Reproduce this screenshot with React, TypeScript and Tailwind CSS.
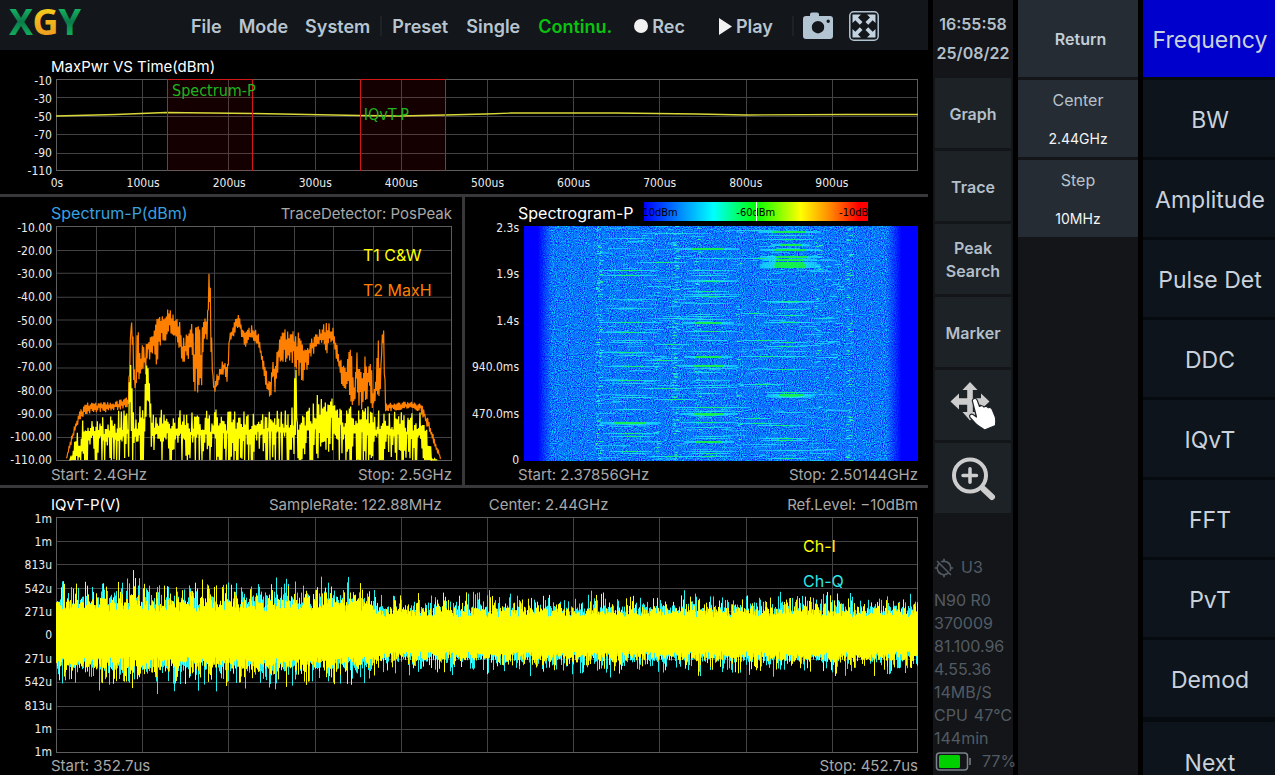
import React from "react";
import { MdGpsOff } from "react-icons/md";

const UI = "font-['Inter','Noto_Sans_CJK_SC',sans-serif]";
const AXIS = "font-['DejaVu_Sans_Condensed','DejaVu_Sans',sans-serif]";

function makeRandom(seed: number) {
  let s = seed;
  return () => {
    s = (s * 1664525 + 1013904223) % 4294967296;
    return s / 4294967296;
  };
}

/* ---------- trace data ---------- */

// [x, highest y, lowest y] of the max-hold trace, three units to a pixel
const maxHold: number[][] = [
  [31, 700, 705], [43, 650, 665], [56, 600, 620], [71, 560, 585], [93, 536, 562], [121, 534, 558], [171, 534, 556],
  [206, 520, 546], [216, 515, 542], [220, 420, 500], [225, 288, 310], [229, 288, 355], [234, 425, 490], [239, 450, 510],
  [244, 315, 480], [248, 300, 440], [253, 405, 460], [261, 360, 450], [269, 375, 440], [276, 325, 410], [286, 305, 370],
  [301, 298, 405], [311, 285, 360], [326, 275, 345], [336, 248, 310], [351, 260, 320], [361, 280, 335], [371, 300, 370],
  [379, 345, 420], [391, 335, 385], [406, 305, 400], [411, 335, 465], [421, 325, 498], [431, 330, 490], [438, 335, 480],
  [445, 268, 330], [452, 295, 345], [456, 230, 330], [459, 118, 180], [463, 200, 300], [467, 345, 430], [471, 445, 490],
  [476, 485, 508], [483, 450, 480], [496, 420, 450], [506, 400, 445], [514, 405, 462], [521, 325, 355], [531, 305, 335],
  [543, 268, 305], [553, 280, 315], [566, 325, 362], [581, 310, 345], [591, 302, 340], [606, 325, 355], [616, 375, 395],
  [626, 415, 460], [636, 465, 505], [643, 475, 518], [651, 385, 465], [659, 405, 498], [666, 365, 425], [676, 335, 405],
  [689, 322, 405], [703, 315, 395], [713, 330, 405], [726, 335, 435], [736, 355, 460], [751, 375, 435], [761, 355, 395],
  [771, 337, 385], [786, 320, 355], [801, 303, 345], [811, 300, 378], [821, 300, 345], [831, 310, 345], [841, 355, 395],
  [851, 395, 425], [859, 425, 497], [871, 430, 485], [881, 385, 495], [884, 365, 505], [893, 495, 545], [903, 390, 475],
  [911, 445, 545], [921, 395, 525], [931, 405, 555], [941, 400, 505], [953, 495, 555], [961, 425, 505], [967, 345, 485],
  [973, 425, 515], [980, 285, 335], [984, 325, 425], [989, 532, 555], [1011, 536, 555], [1051, 532, 550],
  [1093, 535, 555], [1106, 555, 585], [1121, 600, 620], [1136, 645, 665], [1156, 700, 705],
];

// [x, highest y] of the clear-write trace
const clearWrite: number[][] = [
  [40, 700], [50, 650], [62, 615], [80, 585], [110, 558], [160, 562], [216, 550], [222, 440], [225, 418], [229, 520],
  [235, 545], [265, 545], [270, 440], [274, 412], [280, 480], [286, 545], [404, 555], [407, 505], [411, 555], [500, 550],
  [640, 545], [714, 545], [717, 425], [719, 412], [723, 520], [729, 555], [758, 540], [775, 520], [800, 500], [820, 500],
  [850, 520], [870, 545], [980, 550], [1090, 555], [1110, 600], [1130, 650], [1145, 700],
];

function interpolate(points: number[][], x: number, column: number) {
  for (let i = 1; i < points.length; i++) {
    if (x <= points[i][0]) {
      const a = points[i - 1];
      const b = points[i];
      const t = (x - a[0]) / (b[0] - a[0]);
      return a[column] + (b[column] - a[column]) * t;
    }
  }
  return points[points.length - 1][column];
}

function maxHoldPath() {
  const rnd = makeRandom(7);
  let d = "";
  let up = true;
  for (let x = 31; x <= 1156; x += 2) {
    const hi = interpolate(maxHold, x, 1);
    const lo = interpolate(maxHold, x, 2);
    const r = Math.pow(rnd(), 1.5) * 0.6 - 0.16;
    const y = up ? hi + (lo - hi) * r : lo - (lo - hi) * r;
    d += `${d ? "L" : "M"}${x} ${Math.round(Math.min(y, 705))}`;
    up = !up;
  }
  return d;
}

function clearWritePath() {
  const rnd = makeRandom(21);
  let d = "";
  let up = true;
  for (let x = 40; x <= 1145; x += 2) {
    const hi = interpolate(clearWrite, x, 1);
    const spike = hi < 495;
    const y = up
      ? hi - 6 + (spike ? 0 : Math.pow(rnd(), 0.7) * 74)
      : Math.min(705, hi + (spike ? 60 : 74) + Math.pow(rnd(), 1.7) * 160);
    d += `${d ? "L" : "M"}${x} ${Math.round(Math.min(y, 705))}`;
    up = !up;
  }
  return d;
}

function burstPath(seed: number, gain: number) {
  const rnd = makeRandom(seed);
  let d = "";
  for (let x = 0; x < 862; x++) {
    const wide = x < 300 ? 1 : x < 325 ? 1 - (x - 300) / 100 : 0.75;
    const reach = () => (23 + rnd() * 13 + Math.pow(rnd(), 4) * 22 + (rnd() > 0.98 ? rnd() * 14 : 0)) * wide * gain;
    const top = reach();
    const bottom = reach() * 0.95;
    d += `M${x + 0.5} ${(117.5 - top).toFixed(1)}V${(118 + bottom).toFixed(1)}`;
  }
  return d;
}

const maxHoldD = maxHoldPath();
const clearWriteD = clearWritePath();
const channelQ = burstPath(91, 1.06);
const channelI = burstPath(38, 1);

/* ---------- spectrogram data ---------- */

// [x1, x2, y, level]: 0 cyan, 1 green heart, 2 strong green
const bursts: number[][] = [
  [250, 390, 35, 0], [225, 405, 131, 1], [225, 400, 148, 1], [225, 415, 287, 1], [232, 400, 317, 1], [260, 380, 341, 0],
  [250, 360, 347, 0], [225, 390, 377, 1], [270, 370, 388, 0], [240, 415, 420, 1], [225, 410, 461, 1], [260, 390, 470, 0],
  [275, 370, 508, 0], [260, 380, 514, 0], [270, 380, 548, 0], [228, 410, 588, 2], [250, 395, 594, 0], [238, 405, 622, 1],
  [260, 390, 629, 1], [255, 385, 675, 1], [290, 375, 681, 0], [250, 400, 220, 0], [245, 390, 247, 0],
  [458, 645, 65, 2], [500, 660, 97, 0], [488, 632, 132, 0], [500, 610, 148, 0], [480, 640, 161, 0], [485, 640, 166, 1],
  [490, 615, 194, 1], [470, 640, 203, 0], [478, 640, 209, 1], [475, 620, 230, 0], [500, 585, 265, 0], [475, 600, 270, 0],
  [465, 620, 279, 0], [475, 630, 287, 2], [478, 640, 316, 1], [510, 610, 343, 0], [490, 590, 376, 0], [480, 625, 391, 2],
  [465, 640, 418, 2], [480, 640, 425, 0], [490, 605, 437, 0], [510, 625, 462, 0], [505, 630, 477, 0], [510, 640, 483, 0],
  [500, 600, 500, 0], [440, 680, 544, 1], [470, 660, 556, 0], [470, 640, 561, 2], [500, 610, 568, 1], [465, 640, 589, 1],
  [480, 620, 603, 0], [510, 620, 630, 0], [500, 625, 637, 0], [480, 630, 645, 2], [475, 640, 675, 0], [500, 620, 682, 1],
  [490, 620, 689, 1],
  [700, 890, 16, 2], [720, 870, 28, 0], [730, 870, 40, 1], [740, 860, 53, 2], [708, 890, 69, 2], [708, 895, 89, 2],
  [715, 880, 99, 2], [715, 880, 107, 2], [708, 890, 113, 2], [708, 890, 119, 2], [715, 885, 224, 1],
  [730, 870, 229, 0], [750, 850, 250, 0], [750, 850, 268, 1], [720, 870, 287, 1], [740, 850, 347, 1], [720, 850, 361, 1],
  [740, 870, 390, 0], [720, 850, 430, 1], [725, 870, 499, 1], [730, 875, 504, 2], [728, 870, 509, 1], [740, 860, 514, 0],
  [700, 850, 597, 1], [720, 855, 635, 1], [710, 855, 641, 1], [705, 905, 671, 0], [730, 850, 695, 1], [750, 850, 557, 0],
  [340, 490, 109, 1], [375, 540, 277, 0], [390, 495, 354, 1], [355, 480, 401, 1], [350, 500, 485, 1], [390, 520, 520, 1],
  [380, 510, 690, 1], [350, 560, 22, 0], [660, 760, 95, 1], [650, 730, 262, 1], [650, 790, 342, 1], [650, 800, 389, 1],
  [650, 780, 473, 1], [645, 740, 575, 1], [640, 770, 592, 1], [640, 760, 12, 0], [860, 940, 277, 0], [870, 920, 352, 0],
];

type Mark = { x: number; y: number; w: number; h: number; fill: string; opacity: number };

function speckles(): Mark[] {
  const rnd = makeRandom(55);
  const marks: Mark[] = [];
  [[226, 130], [455, 140], [975, 90], [882, 40], [398, 30], [645, 34], [522, 40]].forEach(([cx, count]) => {
    for (let i = 0; i < count; i++) {
      marks.push({
        x: cx - 10 + Math.floor(rnd() * 5) * 3,
        y: Math.floor(rnd() * 235) * 3,
        w: 3 + Math.floor(rnd() * 4) * 3,
        h: 3,
        fill: rnd() > 0.6 ? "#2dff8c" : "#25e8ff",
        opacity: 0.55 + rnd() * 0.45,
      });
    }
  });
  for (let i = 0; i < 260; i++) {
    const w = 12 + rnd() * 60;
    marks.push({
      x: 210 + rnd() * 700,
      y: Math.floor(rnd() * 235) * 3,
      w,
      h: 3,
      fill: "#22e0ff",
      opacity: 0.3 + rnd() * 0.4,
    });
  }
  for (let i = 0; i < 22; i++) {
    marks.push({ x: 900 + rnd() * 40, y: Math.floor(rnd() * 160) * 3, w: 9 + rnd() * 15, h: 3, fill: "#22e0ff", opacity: 0.8 });
  }
  return marks;
}

const speckleMarks = speckles();

/* ---------- chart parts ---------- */

function Grid({ w, h, cols, rows }: { w: number; h: number; cols: number; rows: number }) {
  let d = "";
  for (let i = 1; i < cols; i++) d += `M${Math.round((w * i) / cols) + 0.5} 0V${h}`;
  for (let i = 1; i < rows; i++) d += `M0 ${Math.round((h * i) / rows) + 0.5}H${w}`;
  return (
    <g fill="none" strokeWidth="1">
      <path d={d} stroke="#434345" />
      <rect x="0.5" y="0.5" width={w - 1} height={h - 1} stroke="#5e5e60" />
    </g>
  );
}

function YAxis({ labels, width }: { labels: string[]; width: string }) {
  return (
    <div className={`${AXIS} ${width} flex shrink-0 flex-col items-end justify-between pt-[1px] text-[12px] text-[#ececec]`}>
      {labels.map((label, i) => (
        <span key={i} className="flex h-px items-center whitespace-nowrap">
          {label}
        </span>
      ))}
    </div>
  );
}

function PowerPanel() {
  return (
    <section className="flex min-h-0 flex-[144] flex-col pr-[10px]">
      <h2 className="h-[29px] shrink-0 pt-[4px] pl-[51px] text-[15px] leading-[26px] text-white">MaxPwr VS Time(dBm)</h2>
      <div className="flex min-h-0 flex-1 gap-[4px]">
        <YAxis width="w-[52px]" labels={["-10", "-30", "-50", "-70", "-90", "-110"]} />
        <div className="relative min-w-0 flex-1">
          <svg className="absolute inset-0 h-full w-full" viewBox="0 0 862 92" preserveAspectRatio="none" aria-hidden="true">
            <Grid w={862} h={92} cols={10} rows={5} />
            <g fill="#ff0000" fillOpacity="0.08">
              <rect x="111" y="0" width="86" height="92" />
              <rect x="304" y="0" width="85" height="92" />
            </g>
            <polyline
              points="0,37 60,35.5 110,33.5 197,34.5 304,36.5 344,37 389,36 430,35 455,34 560,34 640,35 690,36 790,35.5 862,35.5"
              fill="none"
              stroke="#d8d83a"
              strokeWidth="1.3"
            />
            <path d="M111.5 92V0.5H196.5V92M304.5 92V0.5H389.5V92" fill="none" stroke="#d01818" />
          </svg>
          <span className={`${AXIS} absolute top-[2px] left-[13%] pl-[4px] text-[16px] leading-[20px] text-[#1fb41f]`}>Spectrum-P</span>
          <span className={`${AXIS} absolute top-[26px] left-[35%] pl-[6px] text-[16px] leading-[20px] text-[#1fb41f]`}>IQvT-P</span>
        </div>
      </div>
      <div className={`${AXIS} flex h-[23px] shrink-0 pl-[57px] text-[12px] leading-[24px] text-[#ececec]`}>
        {["0s", "100us", "200us", "300us", "400us", "500us", "600us", "700us", "800us", "900us"].map((t) => (
          <div key={t} className="flex-1">
            <span className="flex w-0 justify-center whitespace-nowrap">{t}</span>
          </div>
        ))}
      </div>
    </section>
  );
}

function SpectrumPanel() {
  return (
    <section className="flex min-w-0 flex-[462] flex-col pr-[10px]">
      <header className="flex h-[29px] shrink-0 justify-between pt-[4px] pl-[51px] leading-[24px]">
        <h2 className="text-[16px] text-[#3aa0e0]">Spectrum-P(dBm)</h2>
        <span className="text-[15px] leading-[26px] text-[#a8a8a8]">TraceDetector: PosPeak</span>
      </header>
      <div className="flex min-h-0 flex-1 gap-[4px]">
        <YAxis
          width="w-[52px]"
          labels={["-10.00", "-20.00", "-30.00", "-40.00", "-50.00", "-60.00", "-70.00", "-80.00", "-90.00", "-100.00", "-110.00"]}
        />
        <div className="relative min-w-0 flex-1">
          <svg className="absolute inset-0 h-full w-full" viewBox="0 0 396 236" preserveAspectRatio="none" aria-hidden="true">
            <Grid w={396} h={236} cols={10} rows={10} />
            <g transform="scale(0.3333)" fill="none">
              <path d={maxHoldD} stroke="#ff8000" strokeWidth="3.6" />
              <path d={clearWriteD} stroke="#ffff00" strokeWidth="3.8" />
            </g>
          </svg>
          <div className="absolute top-[12px] right-0 flex w-[89px] flex-col text-[16px] leading-[35px]">
            <span className="text-[#ffff00]">T1 C&amp;W</span>
            <span className="text-[#ff8000]">T2 MaxH</span>
          </div>
        </div>
      </div>
      <footer className="flex h-[24px] shrink-0 justify-between pl-[51px] text-[15px] leading-[28px] text-[#a8a8a8]">
        <span>Start: 2.4GHz</span>
        <span>Stop: 2.5GHz</span>
      </footer>
    </section>
  );
}

function SpectrogramPanel() {
  return (
    <section className="flex min-w-0 flex-[463] flex-col pr-[10px]">
      <header className="flex h-[29px] shrink-0 items-start gap-[10px] pr-[50px] pl-[53px]">
        <h2 className="pt-[4px] text-[16px] leading-[24px] whitespace-nowrap text-white">Spectrogram-P</h2>
        <div
          className={`${AXIS} relative mt-[5px] h-[19px] min-w-0 flex-1 overflow-hidden bg-[linear-gradient(90deg,#0000ff,#0090ff_17%,#00ffff_31%,#00ff00_50%,#ffff00_70%,#ff8000_84%,#ff0000_96%)] text-[11px] leading-[22px] text-black`}
        >
          <span className="absolute top-0 left-[-11px]">-110dBm</span>
          <span className="absolute inset-x-0 top-0 text-center">-60dBm</span>
          <span className="absolute top-0 right-[-10px]">-10dBm</span>
          <span className="absolute inset-y-0 left-1/2 w-px bg-white" />
        </div>
      </header>
      <div className="flex min-h-0 flex-1 gap-[5px]">
        <YAxis width="w-[54px]" labels={["2.3s", "1.9s", "1.4s", "940.0ms", "470.0ms", "0"]} />
        <svg className="h-full min-w-0 flex-1" viewBox="0 0 1182 705" preserveAspectRatio="none" aria-hidden="true">
          <defs>
            <filter id="grain" x="0" y="0" width="100%" height="100%" colorInterpolationFilters="sRGB">
              <feTurbulence type="fractalNoise" baseFrequency="0.31" numOctaves="2" seed="4" />
              <feColorMatrix values="0 0 0 0 0.04  1.35 0 0 0 -0.21  0 0 0 0 1  0 0 0 0 1" />
            </filter>
            <linearGradient id="edges">
              <stop offset="0" stopColor="#0000ff" />
              <stop offset="0.035" stopColor="#0000ff" />
              <stop offset="0.07" stopColor="#0000ff" stopOpacity="0" />
              <stop offset="0.92" stopColor="#0000ff" stopOpacity="0" />
              <stop offset="0.958" stopColor="#0000ff" />
              <stop offset="1" stopColor="#0000ff" />
            </linearGradient>
            <linearGradient id="cyan">
              <stop offset="0" stopColor="#18e8ff" stopOpacity="0.6" />
              <stop offset="0.5" stopColor="#28f8d8" />
              <stop offset="1" stopColor="#18e8ff" stopOpacity="0.6" />
            </linearGradient>
            <linearGradient id="green">
              <stop offset="0" stopColor="#00e8d0" stopOpacity="0.1" />
              <stop offset="0.3" stopColor="#10f060" />
              <stop offset="0.7" stopColor="#10f060" />
              <stop offset="1" stopColor="#00e8d0" stopOpacity="0.1" />
            </linearGradient>
          </defs>
          <rect width="1182" height="705" fill="#0080ff" filter="url(#grain)" />
          {speckleMarks.map((m, i) => (
            <rect key={i} x={m.x} y={m.y} width={m.w} height={m.h} fill={m.fill} opacity={m.opacity} />
          ))}
          {bursts.map(([x1, x2, y, level], i) => {
            const inset = (x2 - x1) * 0.24;
            const top = Math.round(y / 3) * 3;
            return (
              <g key={i}>
                <rect
                  x={x1}
                  y={top}
                  width={x2 - x1}
                  height={level === 2 ? 6 : 3}
                  fill="url(#cyan)"
                  opacity={level ? 1 : 0.8}
                />
                {level > 0 && (
                  <rect
                    x={x1 + inset}
                    y={top}
                    width={x2 - x1 - inset * 2}
                    height={level === 2 ? 6 : 3}
                    fill={level === 2 ? "#10f020" : "url(#green)"}
                    opacity={level === 2 ? 0.75 : 0.85}
                  />
                )}
              </g>
            );
          })}
          <rect width="1182" height="705" fill="url(#edges)" />
        </svg>
      </div>
      <footer className="flex h-[24px] shrink-0 justify-between pl-[53px] text-[15px] leading-[28px] text-[#a8a8a8]">
        <span>Start: 2.37856GHz</span>
        <span>Stop: 2.50144GHz</span>
      </footer>
    </section>
  );
}

function IqPanel() {
  return (
    <section className="flex min-h-0 flex-[287] flex-col pr-[10px]">
      <header className="flex h-[29px] shrink-0 justify-between pt-[4px] pl-[51px] text-[15px] leading-[26px] text-[#a8a8a8]">
        <h2 className="w-[218px] text-white">IQvT-P(V)</h2>
        <span className="flex flex-1 gap-[47px]">
          <span>SampleRate: 122.88MHz</span>
          <span>Center: 2.44GHz</span>
        </span>
        <span>Ref.Level: −10dBm</span>
      </header>
      <div className="flex min-h-0 flex-1 gap-[4px]">
        <YAxis width="w-[52px]" labels={["1m", "1m", "813u", "542u", "271u", "0", "271u", "542u", "813u", "1m", "1m"]} />
        <div className="relative min-w-0 flex-1">
          <svg className="absolute inset-0 h-full w-full" viewBox="0 0 862 236" preserveAspectRatio="none" aria-hidden="true">
            <Grid w={862} h={236} cols={10} rows={10} />
            <path d={channelQ} stroke="#20f0f0" strokeWidth="1" fill="none" />
            <path d={channelI} stroke="#ffff00" strokeWidth="1" fill="none" />
          </svg>
          <div className="absolute top-[12px] right-0 flex w-[115px] flex-col text-[16px] leading-[35px]">
            <span className="text-[#ffff00]">Ch-I</span>
            <span className="text-[#2ce8e8]">Ch-Q</span>
          </div>
        </div>
      </div>
      <footer className="flex h-[22px] shrink-0 justify-between pl-[51px] text-[15px] leading-[26px] text-[#a8a8a8]">
        <span>Start: 352.7us</span>
        <span>Stop: 452.7us</span>
      </footer>
    </section>
  );
}

/* ---------- icons ---------- */

function Logo() {
  return (
    <svg className="h-[50px] w-[100px]" viewBox="0 0 100 50" role="img" aria-label="XGY">
      <defs>
        <linearGradient id="leaf" x1="0" y1="0" x2="0" y2="1">
          <stop offset="0.25" stopColor="#14b060" />
          <stop offset="0.5" stopColor="#0b7a4a" />
          <stop offset="0.75" stopColor="#12a85a" />
        </linearGradient>
        <linearGradient id="gold" x1="0" y1="0" x2="0" y2="1">
          <stop offset="0.25" stopColor="#f2cc1c" />
          <stop offset="0.75" stopColor="#f0a020" />
        </linearGradient>
      </defs>
      <text x="9" y="35" fontFamily="'Noto Sans', sans-serif" fontWeight="700" fontSize="36" fill="url(#leaf)">
        X<tspan fill="url(#gold)">G</tspan>Y
      </text>
    </svg>
  );
}

function CameraIcon() {
  return (
    <svg className="h-[28px] w-[30px]" viewBox="0 0 30 28" aria-hidden="true">
      <path
        fillRule="evenodd"
        fill="#b3c4d2"
        d="M3 4h4V2.500Q7 0.500 9 0.500h5Q16 0.500 16 2.500V4h11Q30 4 30 7v17Q30 27 27 27H3Q0 27 0 24V7Q0 4 3 4ZM15 9a6.200 6.200 0 1 0 0 12.400A6.200 6.200 0 1 0 15 9ZM25.200 7.500a1.700 1.700 0 1 0 0 3.400 1.700 1.700 0 1 0 0-3.400Z"
      />
    </svg>
  );
}

function FullscreenIcon() {
  const arrow = "M3.500 3.500h8.500l-3 3 4.500 4.500-2.700 2.700-4.500-4.500-2.800 2.800Z";
  return (
    <svg className="h-[30px] w-[30px]" viewBox="0 0 30 30" aria-hidden="true">
      <rect x="0.800" y="0.800" width="28.400" height="28.400" rx="4" fill="none" stroke="#b3c4d2" strokeWidth="1.500" />
      <g fill="#c3d3e0">
        <path d={arrow} />
        <path d={arrow} transform="matrix(-1 0 0 1 30 0)" />
        <path d={arrow} transform="matrix(1 0 0 -1 0 30)" />
        <path d={arrow} transform="matrix(-1 0 0 -1 30 30)" />
      </g>
    </svg>
  );
}

function MoveIcon() {
  return (
    <svg className="h-[50px] w-[46px]" viewBox="0 0 46 50" aria-hidden="true">
      <path
        fill="#cdcdcd"
        d="M20 1L27.500 9H22.800V17.200H31V12.500L39.500 20.500L31 28.500V23.800H22.800V31H27.500L20 39.500L12.500 31H17.200V23.800H9V28.500L0.500 20.500L9 12.500V17.200H17.200V9H12.500Z"
      />
      <path
        fill="#ffffff"
        stroke="#20252a"
        strokeWidth="1.200"
        strokeLinejoin="round"
        d="M22.500 20.500C21.500 17.500 26 16.300 27.200 19.200L29.500 25.500C31 24.200 33 24.600 33.800 26C35.500 24.800 37.300 25.200 38.200 26.800C40.200 26 41.500 27 42.200 28.500L45.300 36C46.200 39 45.600 42 45.500 44.500L34.500 49C31.500 46.500 28.500 45.300 25.500 42.500L20 36.500C18.800 34 21 32.300 23 33.600L26.500 36Z"
      />
    </svg>
  );
}

function ZoomIcon() {
  return (
    <svg className="h-[46px] w-[46px]" viewBox="0 0 46 46" fill="none" stroke="#cdcdcd" strokeLinecap="round" aria-hidden="true">
      <circle cx="20" cy="19.500" r="16" strokeWidth="4" />
      <path d="M13 19.500H26.500M20 12.800V26.200" strokeWidth="3.500" />
      <path d="M33.500 33L42 41" strokeWidth="6" />
    </svg>
  );
}

/* ---------- bars ---------- */

function TopButton({ children, active }: { children: React.ReactNode; active?: boolean }) {
  return (
    <button type="button" className={`flex items-center gap-[4px] ${active ? "text-[#08c410]" : ""}`}>
      {children}
    </button>
  );
}

function TopBar() {
  return (
    <header className="flex h-[50px] shrink-0 items-center bg-[#13161a] text-[18px] font-semibold text-[#b7c5d0]">
      <div className="w-[191px]">
        <Logo />
      </div>
      <nav className="flex items-center pt-[2px]">
        <div className="flex gap-[17px]">
          <TopButton>File</TopButton>
          <TopButton>Mode</TopButton>
          <TopButton>System</TopButton>
        </div>
        <span className="mx-[10px] h-[20px] w-[2px] bg-[#1e2226]" />
        <div className="flex gap-[18px]">
          <TopButton>Preset</TopButton>
          <TopButton>Single</TopButton>
          <TopButton active>Continu.</TopButton>
        </div>
        <div className="ml-[22px] flex gap-[34px]">
          <TopButton>
            <span className="size-[14px] rounded-full bg-[#f2f2f2]" />
            Rec
          </TopButton>
          <TopButton>
            <svg className="h-[17px] w-[13px]" viewBox="0 0 13 17" aria-hidden="true">
              <path d="M0 0L13 8.500L0 17Z" fill="#f2f2f2" />
            </svg>
            Play
          </TopButton>
        </div>
        <span className="mr-[9px] ml-[19px] h-[20px] w-[2px] bg-[#1e2226]" />
        <div className="flex items-center gap-[16px]">
          <button type="button" aria-label="Screenshot">
            <CameraIcon />
          </button>
          <button type="button" aria-label="Full screen">
            <FullscreenIcon />
          </button>
        </div>
      </nav>
    </header>
  );
}

function SideButton({ children, label }: { children: React.ReactNode; label?: string }) {
  return (
    <button type="button" aria-label={label} className="flex h-[70px] shrink-0 items-center justify-center bg-[#1d2227] px-[4px] pt-[2px] leading-[23px]">
      {children}
    </button>
  );
}

function ToolColumn() {
  return (
    <aside className="flex w-[80px] shrink-0 flex-col bg-[#131519] text-[16px] font-semibold text-[#b3bfc9]">
      <div className="flex h-[78px] shrink-0 flex-col items-center pt-[10px] leading-[29px]">
        <time>16:55:58</time>
        <time>25/08/22</time>
      </div>
      <div className="flex flex-col gap-[3px] px-[2px]">
        <SideButton>Graph</SideButton>
        <SideButton>Trace</SideButton>
        <SideButton>Peak Search</SideButton>
        <SideButton>Marker</SideButton>
        <SideButton label="Move">
          <MoveIcon />
        </SideButton>
        <SideButton label="Zoom">
          <ZoomIcon />
        </SideButton>
      </div>
      <div className="mt-auto flex flex-col pb-[2px] pl-[1px] text-[16px] leading-[23px] font-normal text-[#525b63]">
        <div className="mb-[10px] flex items-center gap-[7px]">
          <MdGpsOff size={20} />
          U3
        </div>
        <span>N90 R0</span>
        <span>370009</span>
        <span>81.100.96</span>
        <span>4.55.36</span>
        <span>14MB/S</span>
        <div className="flex gap-[6px]">
          <span>CPU</span>
          <span>47℃</span>
        </div>
        <span>144min</span>
        <div className="flex items-center gap-[11px] pl-[1px]">
          <svg className="h-[19px] w-[36px] shrink-0" viewBox="0 0 36 19" aria-hidden="true">
            <rect x="1.500" y="1" width="31" height="17" rx="3" fill="none" stroke="#7a838a" strokeWidth="1.500" />
            <rect x="4" y="3" width="21" height="13" rx="1.500" fill="#00d000" />
            <path d="M35 6V13" stroke="#7a838a" strokeWidth="1.500" />
          </svg>
          77%
        </div>
      </div>
    </aside>
  );
}

function FieldButton({ name, value }: { name: string; value: string }) {
  return (
    <button
      type="button"
      className="flex h-[77px] shrink-0 flex-col items-center justify-center gap-[15px] bg-[#252c33] pt-[2px] text-[16px] leading-[24px] text-[#b8c2ca]"
    >
      <span>{name}</span>
      <span className="text-[14px] text-[#f4f4f4]">{value}</span>
    </button>
  );
}

function FieldColumn() {
  return (
    <aside className="flex w-[120px] shrink-0 flex-col gap-[3px] bg-[#131519]">
      <button type="button" className="h-[77px] shrink-0 bg-[#252c33] pl-[5px] text-[16px] font-semibold text-[#c3ced6]">
        Return
      </button>
      <FieldButton name="Center" value="2.44GHz" />
      <FieldButton name="Step" value="10MHz" />
    </aside>
  );
}

function MenuColumn() {
  return (
    <nav className="flex w-[132px] shrink-0 flex-col gap-[3px] bg-[#060b10] text-[23px] text-[#c9d2dc]">
      <button type="button" className="h-[77px] shrink-0 bg-[#0000cd] pt-[4px] pl-[2px] whitespace-nowrap">
        Frequency
      </button>
      {["BW", "Amplitude", "Pulse Det", "DDC", "IQvT", "FFT", "PvT", "Demod"].map((item) => (
        <button key={item} type="button" className="h-[77px] shrink-0 bg-[#0d141b] pt-[4px] pl-[2px] whitespace-nowrap">
          {item}
        </button>
      ))}
      <button type="button" className="mt-[2px] h-[80px] shrink-0 bg-[#0d141b] pt-[2px] pl-[2px]">
        Next
      </button>
    </nav>
  );
}

export default function App() {
  return (
    <div className={`${UI} flex h-screen min-h-[600px] gap-[5px] overflow-hidden bg-black`}>
      <main className="flex min-w-0 flex-1 flex-col">
        <TopBar />
        <PowerPanel />
        <div className="h-[3px] shrink-0 bg-[#38383b]" />
        <div className="flex min-h-0 flex-[288]">
          <SpectrumPanel />
          <div className="w-[3px] shrink-0 bg-[#38383b]" />
          <SpectrogramPanel />
        </div>
        <div className="h-[3px] shrink-0 bg-[#38383b]" />
        <IqPanel />
      </main>
      <ToolColumn />
      <FieldColumn />
      <MenuColumn />
    </div>
  );
}
